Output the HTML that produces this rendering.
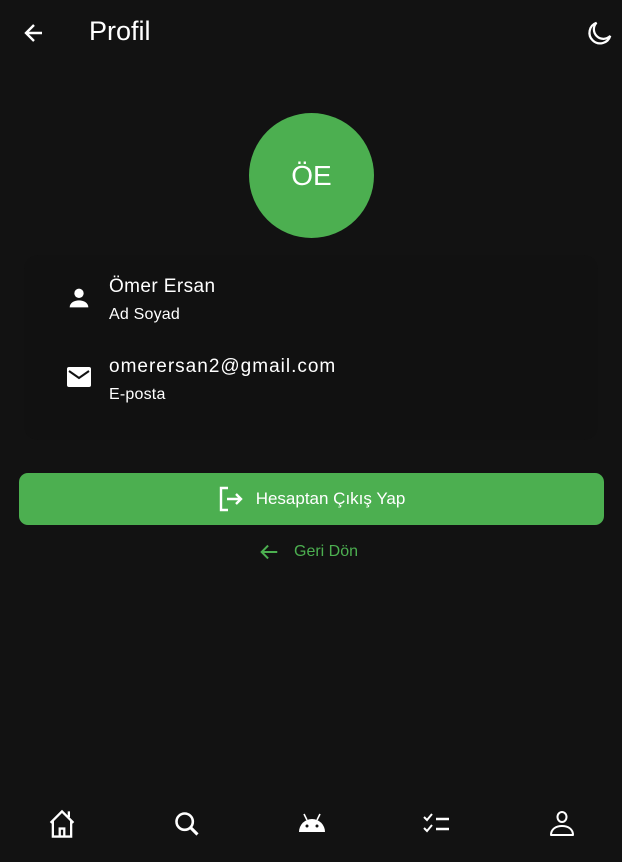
<!DOCTYPE html>
<html><head><meta charset="utf-8"><style>
*{margin:0;padding:0;box-sizing:border-box}
body{width:622px;height:862px;background:#121212;font-family:"Liberation Sans",sans-serif;color:#fff;position:relative;overflow:hidden}
.abs{position:absolute}
.title{left:89px;top:16px;font-size:27px}
.avatar{left:249px;top:113px;width:125px;height:125px;border-radius:50%;background:#4caf50;display:flex;align-items:center;justify-content:center;font-size:28px}
.card{left:24px;top:255px;width:574px;height:185px;background:#111111;border-radius:14px}
.n{font-size:19px;letter-spacing:0.4px}.s{font-size:16px;letter-spacing:0.2px}
.btn{left:19px;top:473px;width:585px;height:52px;background:#4caf50;border-radius:9px;display:flex;align-items:center;justify-content:center;font-size:17px;gap:12px}
.back{left:258px;top:541px;color:#4caf50;font-size:16px;display:flex;align-items:center;gap:14px}
</style></head><body>
<svg class="abs" style="left:22px;top:21px" width="24" height="24" viewBox="0 0 24 24"><path d="M20 12H5M12 4l-8 8 8 8" stroke="#fff" stroke-width="2.4" fill="none"/></svg>
<div class="abs title">Profil</div>
<svg class="abs" style="left:584px;top:19px" width="30" height="30" viewBox="0 0 24 24"><path d="M10 3a8.5 8.5 0 1 0 11 10.5A7.5 7.5 0 0 1 10 3z" stroke="#fff" stroke-width="1.8" fill="none"/></svg>
<div class="abs avatar">ÖE</div>
<div class="abs card"></div>
<svg class="abs" style="left:65px;top:284px" width="28" height="28" viewBox="0 0 24 24"><circle cx="12" cy="8" r="4" fill="#fff"/><path d="M4 20c0-4 4-6 8-6s8 2 8 6z" fill="#fff"/></svg>
<div class="abs n" style="left:109px;top:276px">Ömer Ersan</div>
<div class="abs s" style="left:109px;top:306px">Ad Soyad</div>
<svg class="abs" style="left:66px;top:366px" width="26" height="22" viewBox="0 0 26 22"><rect x="1" y="1" width="24" height="20" rx="2" fill="#fff"/><path d="M3 5l10 7 10-7" stroke="#121212" stroke-width="2" fill="none"/></svg>
<div class="abs n" style="left:109px;top:356px;letter-spacing:1px">omerersan2@gmail.com</div>
<div class="abs s" style="left:109px;top:386px">E-posta</div>
<div class="abs btn"><svg width="26" height="26" viewBox="0 0 26 26"><path d="M10 2H3v22h7" stroke="#fff" stroke-width="2.4" fill="none"/><path d="M9 13h14M18 8l5 5-5 5" stroke="#fff" stroke-width="2.4" fill="none"/></svg>Hesaptan Çıkış Yap</div>
<div class="abs back"><svg width="22" height="22" viewBox="0 0 24 24"><path d="M21 12H4M11 5l-7 7 7 7" stroke="#4caf50" stroke-width="2.2" fill="none"/></svg>Geri Dön</div>
<svg class="abs" style="left:46px;top:808px" width="32" height="32" viewBox="0 0 26 28"><path d="M3 13L13 3l10 10M5 11v14h16V11M11 25v-7h4v7M19 8V3" stroke="#fff" stroke-width="2" fill="none"/></svg>
<svg class="abs" style="left:173px;top:810px" width="28" height="28" viewBox="0 0 24 24"><circle cx="10" cy="10" r="7" stroke="#fff" stroke-width="2.2" fill="none"/><path d="M15 15l6 6" stroke="#fff" stroke-width="2.6"/></svg>
<svg class="abs" style="left:297px;top:812px" width="30" height="22" viewBox="0 0 30 22"><path d="M2 20a13 13 0 0 1 26 0z" fill="#fff"/><path d="M7 2l3 6M23 2l-3 6" stroke="#fff" stroke-width="1.6"/><circle cx="10" cy="14" r="1.5" fill="#121212"/><circle cx="20" cy="14" r="1.5" fill="#121212"/></svg>
<svg class="abs" style="left:423px;top:812px" width="28" height="24" viewBox="0 0 28 24"><path d="M1 5l3 3 5-6M1 16l3 3 5-6" stroke="#fff" stroke-width="2" fill="none"/><path d="M13 7h13M13 17h13" stroke="#fff" stroke-width="2.5"/></svg>
<svg class="abs" style="left:548px;top:810px" width="28" height="28" viewBox="0 0 28 28"><ellipse cx="14" cy="7" rx="4.5" ry="5" stroke="#fff" stroke-width="2" fill="none"/><path d="M3 25c0-6 5-9 11-9s11 3 11 9z" stroke="#fff" stroke-width="2" fill="none" stroke-linejoin="round"/></svg>
</body></html>
